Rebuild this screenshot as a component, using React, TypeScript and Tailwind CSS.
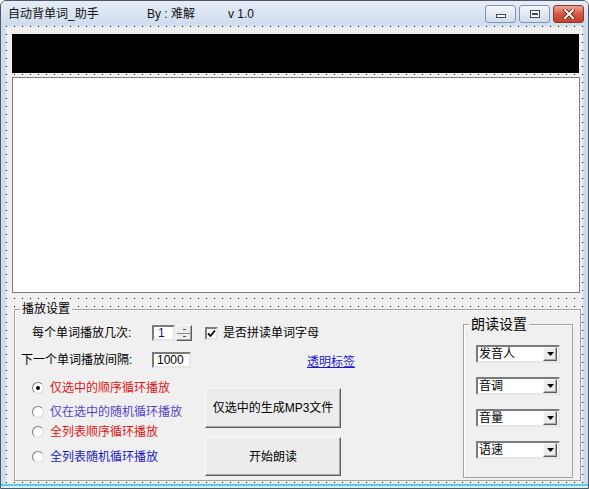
import React from "react";

const sunken =
  "border-2 border-t-[#7a7a7a] border-l-[#7a7a7a] border-r-[#e6e6e6] border-b-[#e6e6e6] bg-white";
const raised =
  "border border-t-[#f8f8f8] border-l-[#f8f8f8] border-r-[#5c5c5c] border-b-[#5c5c5c] bg-[#ececec] shadow-[inset_-1px_-1px_0_#a8a8a8]";
const dots =
  "bg-[#f0f0f0] bg-[radial-gradient(circle_at_0.5px_0.5px,#000_0.6px,transparent_0.7px)] bg-[length:8px_8px]";

function Triangle() {
  return (
    <svg width="7" height="4" viewBox="0 0 7 4">
      <polygon points="0,0 7,0 3.5,4" fill="#000" />
    </svg>
  );
}

function Combo({ label }: { label: string }) {
  return (
    <div className={`ml-[12px] flex h-[18px] w-[84px] items-center ${sunken}`}>
      <span className="flex-1 pl-[1px] text-[12px] leading-[14px] text-black">{label}</span>
      <span className={`mr-[1px] flex h-[14px] w-[14px] items-center justify-center ${raised}`}>
        <Triangle />
      </span>
    </div>
  );
}

function Radio({
  label,
  color,
  checked,
  className,
}: {
  label: string;
  color: string;
  checked?: boolean;
  className: string;
}) {
  return (
    <div className={`flex h-[16px] items-center ${className}`}>
      <span className="ml-[17px] flex h-[12px] w-[12px] items-center justify-center rounded-full border border-t-[#7d7d7d] border-l-[#7d7d7d] border-r-[#d8d8d8] border-b-[#d8d8d8] bg-white">
        {checked && <span className="h-[4px] w-[4px] rounded-full bg-black" />}
      </span>
      <span className={`ml-[6px] text-[12px] leading-[16px] ${color}`}>{label}</span>
    </div>
  );
}

function TitleButtons() {
  return (
    <div className="mr-[4px] mt-[4px] flex h-[18px] gap-[3px] self-start">
      <div className="flex w-[31px] items-end justify-center rounded-[3px] border border-[#8295b0] bg-linear-to-b from-[#f4f7fb] to-[#cfdbea] pb-[4px]">
        <span className="h-[4px] w-[10px] border border-[#3a4a60] bg-white" />
      </div>
      <div className="flex w-[31px] items-center justify-center rounded-[3px] border border-[#8295b0] bg-linear-to-b from-[#f4f7fb] to-[#cfdbea]">
        <span className="flex h-[8px] w-[10px] items-center justify-center border border-[#3a4a60] bg-white">
          <span className="h-[2px] w-[6px] bg-[#3a4a60]" />
        </span>
      </div>
      <div className="flex w-[31px] items-center justify-center rounded-[3px] border border-[#8a3a2c] bg-linear-to-b from-[#eba797] via-[#d5573f] to-[#c2432c]">
        <svg width="12" height="10" viewBox="0 0 12 10">
          <path d="M2 1 L10 9 M10 1 L2 9" stroke="#4a1a10" strokeWidth="3.4" strokeLinecap="square" />
          <path d="M2 1 L10 9 M10 1 L2 9" stroke="#fff" strokeWidth="2" strokeLinecap="square" />
        </svg>
      </div>
    </div>
  );
}

export default function App() {
  return (
    <div className="flex h-[489px] w-[589px] flex-col overflow-hidden rounded-t-[6px] border border-[#4f5966] bg-[#ccdbee] font-['Liberation_Sans','Noto_Sans_CJK_SC',sans-serif] text-black">
      {/* title bar */}
      <div className="flex h-[25px] shrink-0 items-center bg-linear-to-b from-[#e6edf7] to-[#cddbee] text-[12px] leading-[16px] text-[#111]">
        <span className="w-[146px] pl-[7px]">自动背单词_助手</span>
        <span className="w-[81px]">By : 难解</span>
        <span>v 1.0</span>
        <div className="flex-1" />
        <TitleButtons />
      </div>

      {/* client */}
      <div className={`ml-[5px] flex h-[458px] w-[577px] shrink-0 flex-col ${dots}`}>
        <div className="ml-[6px] mt-[8px] h-[39px] w-[567px] bg-black" />
        <div className="ml-[6px] mt-[4px] h-[216px] w-[568px] border border-[#7c7c7c] bg-white" />

        <fieldset className="ml-[8px] mt-[8px] h-[180px] w-[567px] border border-[#a3a3a3] bg-[#f0f0f0] shadow-[inset_1px_1px_0_#fff]">
          <legend className="ml-[5px] bg-[#f0f0f0] px-[2px] text-[12px] leading-[16px]">播放设置</legend>
          <div className="flex">
            <div className="flex w-[448px] flex-col text-[12px] leading-[16px]">
              <div className="mt-[8px] flex h-[16px] items-center">
                <span className="w-[137px] pl-[17px]">每个单词播放几次:</span>
                <div className={`flex h-[16px] w-[23px] items-center pl-[4px] text-[12px] text-[#10108a] ${sunken}`}>
                  1
                </div>
                <div className={`ml-[1px] flex h-[16px] w-[16px] flex-col ${raised}`}>
                  <div className="flex flex-1 items-center justify-center border-b border-[#8a8a8a]">
                    <span className="h-[1px] w-[3px] bg-[#555]" />
                  </div>
                  <div className="flex flex-1 items-center justify-center">
                    <span className="h-[1px] w-[3px] bg-[#555]" />
                  </div>
                </div>
                <div className={`ml-[13px] flex h-[13px] w-[13px] items-center justify-center ${sunken}`}>
                  <svg width="9" height="9" viewBox="0 0 9 9">
                    <path d="M1 4.5 L3.5 7 L8 1.5" stroke="#000" strokeWidth="1.8" fill="none" />
                  </svg>
                </div>
                <span className="ml-[5px]">是否拼读单词字母</span>
              </div>

              <div className="mt-[11px] flex h-[16px] items-center">
                <span className="w-[137px] pl-[6px]">下一个单词播放间隔:</span>
                <div className={`flex h-[16px] w-[39px] items-center pl-[3px] text-[12px] ${sunken}`}>1000</div>
                <span className="ml-[116px] mt-[4px] text-[#1a1ad0] underline">透明标签</span>
              </div>

              <div className="mt-[12px] flex">
                <div className="flex w-[190px] flex-col">
                  <Radio className="" checked label="仅选中的顺序循环播放" color="text-[#e01414]" />
                  <Radio className="mt-[8px]" label="仅在选中的随机循环播放" color="text-[#5444cc]" />
                  <Radio className="mt-[4px]" label="全列表顺序循环播放" color="text-[#e01414]" />
                  <Radio className="mt-[9px]" label="全列表随机循环播放" color="text-[#1818c4]" />
                </div>
                <div className="mt-[8px] flex flex-col">
                  <button className={`h-[40px] w-[136px] text-[12px] ${raised}`}>仅选中的生成MP3文件</button>
                  <button className={`mt-[9px] h-[39px] w-[136px] text-[12px] ${raised}`}>开始朗读</button>
                </div>
              </div>
            </div>

            <fieldset className="-mt-[2px] h-[163px] w-[110px] border border-[#a3a3a3] shadow-[inset_1px_1px_0_#fff]">
              <legend className="ml-[5px] bg-[#f0f0f0] px-[2px] text-[14px] leading-[18px]">朗读设置</legend>
              <div className="mt-[12px] flex flex-col gap-[14px]">
                <Combo label="发音人" />
                <Combo label="音调" />
                <Combo label="音量" />
                <Combo label="语速" />
              </div>
            </fieldset>
          </div>
        </fieldset>
      </div>

      <div className="flex-1 border-t-2 border-[#5ccbe8] bg-[#d6eef7]" />
    </div>
  );
}
